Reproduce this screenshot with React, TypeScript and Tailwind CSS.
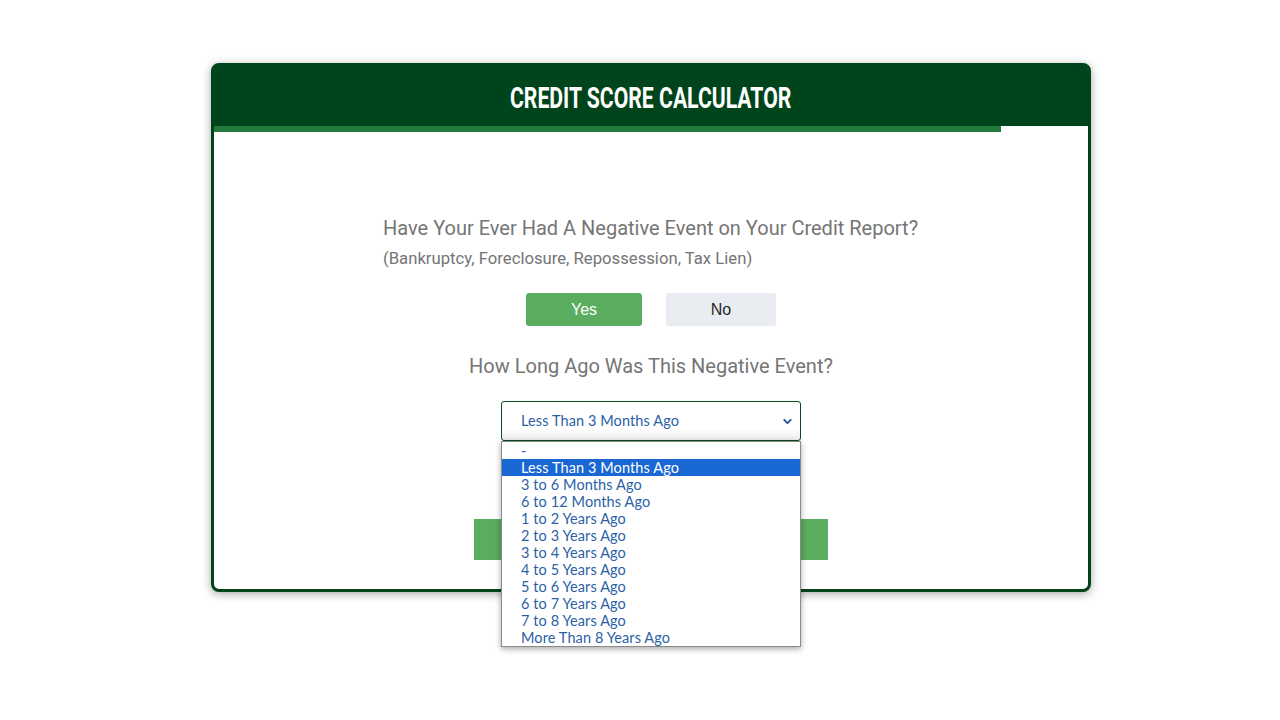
import React from 'react';
import { ChevronDown } from 'lucide-react';

const options = [
  '-',
  'Less Than 3 Months Ago',
  '3 to 6 Months Ago',
  '6 to 12 Months Ago',
  '1 to 2 Years Ago',
  '2 to 3 Years Ago',
  '3 to 4 Years Ago',
  '4 to 5 Years Ago',
  '5 to 6 Years Ago',
  '6 to 7 Years Ago',
  '7 to 8 Years Ago',
  'More Than 8 Years Ago',
];

export default function App() {
  const selected = 1;

  return (
    <div className="flex min-h-screen justify-center bg-white pl-[22px] pt-[63px] font-['Roboto',sans-serif]">
      <div className="h-fit w-[880px] rounded-[8px] border-[3px] border-[#00441b] bg-white shadow-[0_2px_10px_rgba(0,0,0,0.35)]">
        <div className="flex h-[60px] items-center justify-center rounded-t-[4px] bg-[#00441b]">
          <h1 className="inline-block origin-center scale-x-[0.73] pt-[4px] text-[29px] font-bold uppercase leading-[32px] text-white">
            Credit Score Calculator
          </h1>
        </div>
        <div className="h-[6px] w-[90%] bg-[#217a3c]" />

        <div className="flex flex-col items-center pb-[29px] pt-[82px]">
          <div className="w-[536px] text-[#757575]">
            <p className="text-[20px] leading-[28px]">Have Your Ever Had A Negative Event on Your Credit Report?</p>
            <p className="mt-[5px] text-[16.7px] leading-[24px]">(Bankruptcy, Foreclosure, Repossession, Tax Lien)</p>
          </div>

          <div className="mt-[22px] flex gap-[24px] font-['Liberation_Sans',sans-serif]">
            <button className="h-[33px] w-[116px] rounded-[3px] bg-[#5aad5f] text-[16px] text-white">Yes</button>
            <button className="h-[33px] w-[110px] rounded-[3px] bg-[#e9ecf0] text-[16px] text-[#1f2a2a]">No</button>
          </div>

          <p className="mt-[26px] text-[20px] leading-[28px] text-[#757575]">How Long Ago Was This Negative Event?</p>

          <div className="relative mt-[21px] w-[300px]">
            <div className="flex h-[40px] items-center justify-between rounded-[3px] border border-[#0a4a22] bg-gradient-to-b from-white from-70% to-[#ececec] pl-[19px] pr-[6px] font-['Lato',sans-serif] text-[14.5px] tracking-[0.1px] text-[#2c5fa6]">
              <span>{options[selected]}</span>
              <ChevronDown size={13} strokeWidth={3.5} className="text-[#1d5aa6]" />
            </div>
            <ul className="absolute left-0 top-[40px] z-10 w-[300px] border border-[#8a8a8a] bg-white font-['Lato',sans-serif] text-[14.5px] tracking-[0.1px] shadow-[0_2px_6px_rgba(0,0,0,0.35)]">
              {options.map((o, i) => (
                <li
                  key={o}
                  className={
                    i === selected
                      ? 'h-[17px] bg-[#1967d2] pl-[19px] leading-[17px] text-white'
                      : 'h-[17px] pl-[19px] leading-[17px] text-[#2c5fa6]'
                  }
                >
                  {o}
                </li>
              ))}
            </ul>
          </div>

          <button className="mt-[78px] h-[41px] w-[354px] bg-[#5aad5f] text-[16px] text-white">Next</button>
        </div>
      </div>
    </div>
  );
}
